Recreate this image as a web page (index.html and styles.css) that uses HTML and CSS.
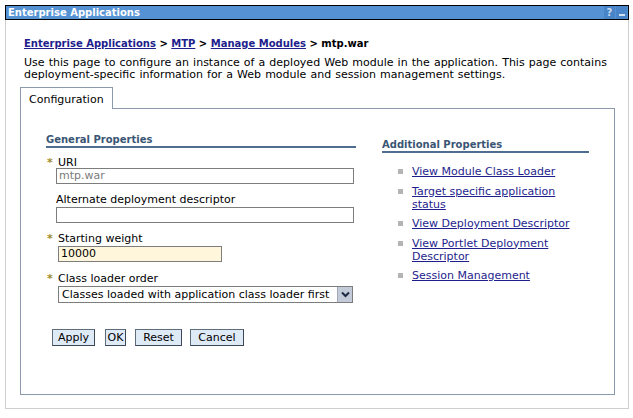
FILE: index.html
```html
<!DOCTYPE html>
<html>
<head>
<meta charset="utf-8">
<link rel="stylesheet" href="styles.css">
</head>
<body>
<div class="window">
  <div class="titlebar">
    <span class="title">Enterprise Applications</span>
    <span class="tb-btn help">?</span>
    <span class="tb-btn min"><span class="dash"></span></span>
  </div>
  <div class="winbody">
    <div class="crumbs">
      <a href="#">Enterprise Applications</a> &gt; <a href="#">MTP</a> &gt; <a href="#">Manage Modules</a> &gt; mtp.war
    </div>
    <p class="desc">Use this page to configure an instance of a deployed Web module in the application. This page contains deployment-specific information for a Web module and session management settings.</p>
    <div class="tabs"><span class="tab">Configuration</span><span class="tabfill"></span></div>
    <div class="panel">
      <div class="col-left">
        <div class="sechead">General Properties</div>
        <div class="field f-uri">
          <div class="label"><span class="req">*</span>URI</div>
          <div class="input ro wide">mtp.war</div>
        </div>
        <div class="field f-alt">
          <div class="label nore">Alternate deployment descriptor</div>
          <div class="input wide"></div>
        </div>
        <div class="field">
          <div class="label"><span class="req">*</span>Starting weight</div>
          <div class="input num">10000</div>
        </div>
        <div class="field f-sel">
          <div class="label"><span class="req">*</span>Class loader order</div>
          <div class="select"><span class="val">Classes loaded with application class loader first</span><span class="arrow"><svg width="9" height="7" viewBox="0 0 9 7"><path d="M1 1.5 L4.5 5 L8 1.5" fill="none" stroke="#1c2a44" stroke-width="2"/></svg></span></div>
        </div>
        <div class="buttons">
          <button class="btn b-apply">Apply</button>
          <button class="btn b-ok">OK</button>
          <button class="btn b-reset">Reset</button>
          <button class="btn b-cancel">Cancel</button>
        </div>
      </div>
      <div class="col-right">
        <div class="sechead">Additional Properties</div>
        <ul class="links">
          <li><a href="#">View Module Class Loader</a></li>
          <li><a href="#">Target specific application status</a></li>
          <li><a href="#">View Deployment Descriptor</a></li>
          <li><a href="#">View Portlet Deployment Descriptor</a></li>
          <li><a href="#">Session Management</a></li>
        </ul>
      </div>
    </div>
  </div>
</div>
</body>
</html>
```
FILE: styles.css
```css
* { box-sizing: border-box; }
body {
  margin: 0;
  background: #fff;
  font-family: "DejaVu Sans", Verdana, sans-serif;
  font-size: 11px;
  color: #000;
}
.window {
  margin: 5px 0 0 5px;
  width: 624px;
}
.titlebar {
  height: 15px;
  background: #5592d4;
  border: 1px solid #000;
  display: flex;
  align-items: center;
  color: #fff;
}
.title {
  font-weight: bold;
  font-size: 10px;
  padding-left: 2px;
  flex: 1;
  line-height: 13px;
}
.tb-btn {
  width: 11px;
  height: 13px;
  background: #4a84c8;
  color: #c8dcf0;
  font-weight: bold;
  font-size: 10px;
  line-height: 13px;
  text-align: center;
  margin-left: 1px;
  display: flex;
  align-items: center;
  justify-content: center;
}
.tb-btn.min { margin-right: 1px; }
.dash { width: 6px; height: 2px; background: #d0e0f0; margin-top: 4px; }
.winbody {
  border: 1px solid #cfcfcf;
  border-top: none;
  height: 389px;
  padding: 17px 13px 0 14px;
}
.crumbs {
  font-weight: bold;
  font-size: 10px;
  line-height: 13px;
  padding-left: 4px;
}
a { color: #1e1e8c; }
.desc {
  margin: 7px 0 0 4px;
  line-height: 12px;
  word-spacing: 0.6px;
}
.tabs {
  display: flex;
  margin-top: 6px;
  height: 22px;
}
.tab {
  width: 93px;
  border: 1px solid #8a9aac;
  border-bottom: none;
  padding: 5px 0 0 8px;
  line-height: 13px;
  background: #fff;
}
.tabfill {
  flex: 1;
  border-bottom: 1px solid #8a9aac;
}
.panel {
  border: 1px solid #8a9aac;
  border-top: none;
  height: 286px;
  display: flex;
  padding: 25px 0 0 25px;
}
.col-left { width: 310px; }
.col-right { width: 207px; margin-left: 26px; padding-top: 5px; }
.sechead {
  font-weight: bold;
  font-size: 10px;
  color: #3a5674;
  line-height: 12px;
  border-bottom: 2px solid #4f6d8f;
}
.field { margin-top: 10px; }
.field.f-uri { margin-top: 9px; }
.field.f-uri .input { margin-top: -1px; }
.field.f-alt { margin-top: 10px; }
.field.f-sel { margin-top: 11px; }
.label {
  line-height: 12px;
  padding-left: 1px;
}
.label.nore { padding-left: 10px; }
.req {
  color: #a08c2a;
  font-weight: bold;
  display: inline-block;
  width: 11px;
}
.input {
  height: 16px;
  border: 1px solid #7d7d7d;
  background: #fff;
  margin: 1px 0 0 10px;
  line-height: 14px;
  padding-left: 2px;
}
.input.wide { width: 298px; }
.input.ro { color: #7b7b7b; }
.input.num { width: 164px; margin-left: 12px; background: #fff6dc; }
.select {
  width: 295px;
  height: 17px;
  margin: 1px 0 0 12px;
  border: 1px solid #7d7d7d;
  display: flex;
  align-items: stretch;
}
.select .val { flex: 1; padding-left: 3px; line-height: 15px; white-space: nowrap; overflow: hidden; }
.select .arrow {
  width: 15px;
  background: #c4cbd8;
  border-left: 1px solid #a0a8b8;
  display: flex;
  align-items: center;
  justify-content: center;
}
.buttons {
  margin-top: 26px;
  display: flex;
  padding-left: 6px;
}
.btn {
  font-family: "DejaVu Sans", Verdana, sans-serif;
  font-size: 11px;
  height: 17px;
  background: #dfeaf7;
  border: 1px solid #5f6c7c;
  border-right-color: #3c4654;
  border-bottom-color: #3c4654;
  padding: 0;
  margin: 0;
  color: #000;
  line-height: 14px;
}
.b-apply { width: 43px; }
.b-ok { width: 21px; margin-left: 10px; }
.b-reset { width: 47px; margin-left: 9px; }
.b-cancel { width: 54px; margin-left: 8px; }
.links {
  list-style: none;
  margin: 12px 0 0 0;
  padding: 0 0 0 16px;
}
.links li {
  position: relative;
  padding-left: 14px;
  line-height: 13px;
  margin-bottom: 6.5px;
  width: 178px;
}
.links li::before {
  content: "";
  position: absolute;
  left: 0;
  top: 4px;
  width: 5px;
  height: 5px;
  background: #b4b4b4;
}
```
